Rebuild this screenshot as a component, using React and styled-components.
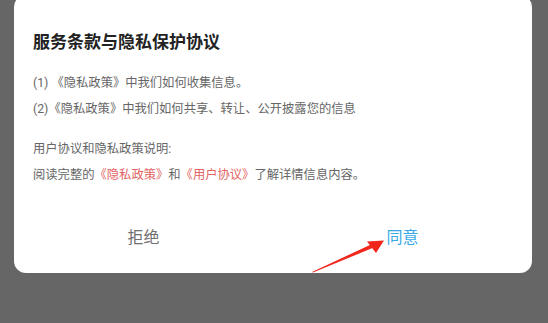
import React from "react";
import styled, { createGlobalStyle } from "styled-components";

const GlobalStyle = createGlobalStyle`
  html, body {
    margin: 0;
    padding: 0;
    background: #666666;
  }
  body {
    font-family: Roboto, "Noto Sans CJK SC", sans-serif;
  }
`;

const Page = styled.div`
  position: relative;
  width: 548px;
  height: 323px;
  overflow: hidden;
  background: #666666;
  padding: 0 16px 0 14px;
  box-sizing: border-box;
`;

const Dialog = styled.div`
  margin-top: -5px;
  background: #ffffff;
  border-radius: 12px;
  padding: 35px 19px 0;
  display: flex;
  flex-direction: column;
`;

const Title = styled.h2`
  margin: 0;
  font-size: 17px;
  line-height: 24px;
  font-weight: 700;
  color: #222222;
`;

const Section = styled.div`
  margin-top: ${(p) => p.$gap}px;
  display: flex;
  flex-direction: column;
`;

const Line = styled.p`
  margin: 0;
  font-size: 12.3px;
  line-height: 25.5px;
  color: #666666;
  white-space: nowrap;
`;

const Link = styled.span`
  color: #e36464;
`;

const Actions = styled.div`
  margin: 15px -19px 0;
  height: 70px;
  display: grid;
  grid-template-columns: 1fr 1fr;
  align-items: center;
`;

const ActionButton = styled.button`
  border: 0;
  background: none;
  padding: 0;
  font-family: inherit;
  font-size: 16px;
  line-height: 22px;
  color: ${(p) => (p.$primary ? "#36a9e6" : "#707070")};
  cursor: pointer;
`;

const Arrow = styled.svg`
  position: absolute;
  left: 0;
  top: 0;
  pointer-events: none;
`;

export default function App() {
  return (
    <>
      <GlobalStyle />
      <Page>
        <Dialog>
          <Title>服务条款与隐私保护协议</Title>
          <Section $gap={17}>
            <Line>(1) 《隐私政策》中我们如何收集信息。</Line>
            <Line>(2)《隐私政策》中我们如何共享、转让、公开披露您的信息</Line>
          </Section>
          <Section $gap={15}>
            <Line>用户协议和隐私政策说明:</Line>
            <Line>
              阅读完整的<Link>《隐私政策》</Link>和<Link>《用户协议》</Link>了解详情信息内容。
            </Line>
          </Section>
          <Actions>
            <ActionButton>拒绝</ActionButton>
            <ActionButton $primary>同意</ActionButton>
          </Actions>
        </Dialog>
        <Arrow width="548" height="323" viewBox="0 0 548 323">
          <polygon
            points="312,272 371,244.5 372.5,248 313,272.6"
            fill="#f0261c"
          />
          <polygon points="367,241.5 384,240.5 376,253" fill="#f0261c" />
        </Arrow>
      </Page>
    </>
  );
}
